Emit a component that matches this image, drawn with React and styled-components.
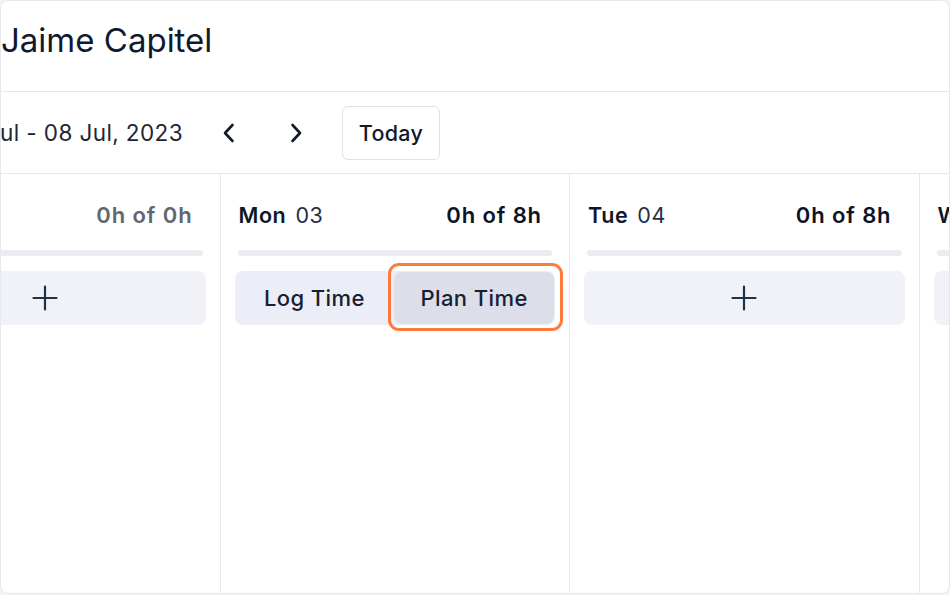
import React from 'react';
import styled, { createGlobalStyle } from 'styled-components';

const GlobalStyle = createGlobalStyle`
  body {
    margin: 0;
    background: #f3f4f7;
    font-family: Inter, "Noto Sans", "Liberation Sans", sans-serif;
    color: #111a2c;
  }
`;

const Card = styled.div`
  width: 950px;
  height: 594px;
  box-sizing: border-box;
  border: 1px solid #e7e8ee;
  border-radius: 8px;
  background: #ffffff;
  overflow: hidden;
  display: flex;
  flex-direction: column;
`;

const Header = styled.header`
  height: 91px;
  flex: none;
  box-sizing: border-box;
  border-bottom: 1px solid #e5e6ef;
  padding: 19px 0 0 0;
`;

const Title = styled.h1`
  margin: 0;
  font-size: 33px;
  font-weight: 400;
  letter-spacing: 0;
  color: #101a2e;
`;

const Toolbar = styled.div`
  height: 82px;
  flex: none;
  box-sizing: border-box;
  border-bottom: 1px solid #e5e6ef;
  display: flex;
  align-items: center;
  margin-left: -118px;
`;

const DateRange = styled.span`
  width: 300px;
  flex: none;
  text-align: right;
  font-size: 22.5px;
  letter-spacing: 0.4px;
  color: #1c2638;
  margin-right: 26px;
  white-space: nowrap;
`;

const NavButton = styled.button`
  width: 40px;
  height: 40px;
  border: none;
  background: transparent;
  padding: 0;
  display: flex;
  align-items: center;
  justify-content: center;
  margin-right: 27px;
  color: #111a2c;
`;

const TodayButton = styled.button`
  height: 54px;
  width: 98px;
  border: 1px solid #dfe1e9;
  border-radius: 6px;
  background: #ffffff;
  font-family: inherit;
  font-size: 21.5px;
  font-weight: 500;
  letter-spacing: 0.3px;
  color: #111a2c;
  margin-left: -1px;
`;

const Days = styled.div`
  flex: 1;
  display: flex;
  margin-left: -130px;
`;

const Column = styled.section`
  flex: none;
  width: 349.5px;
  box-sizing: border-box;
  border-right: 1px solid #e5e6ef;
  padding: 0 14px;
`;

const DayHead = styled.div`
  display: flex;
  justify-content: space-between;
  align-items: center;
  height: 82px;
  padding: 0 13px 0 4px;
`;

const DayName = styled.span`
  font-size: 21.5px;
  color: #0f1727;
  b {
    font-weight: 600;
    letter-spacing: 0.6px;
  }
  span {
    font-weight: 400;
    color: #243044;
    margin-left: 9px;
    letter-spacing: 0.6px;
  }
`;

const Hours = styled.span`
  font-size: 22px;
  font-weight: 600;
  letter-spacing: 0.9px;
  color: ${p => (p.muted ? '#62666f' : '#0c1424')};
`;

const Bar = styled.div`
  height: 6px;
  border-radius: 3px;
  background: #e9edf1;
  margin: -6px 3px 15px;
`;

const AddButton = styled.button`
  width: 100%;
  height: 54px;
  border: none;
  border-radius: 8px;
  background: #f0f2f7;
  display: flex;
  align-items: center;
  justify-content: center;
  color: #1d3246;
  padding: 0;
`;

const Segmented = styled.div`
  display: flex;
  height: 54px;
  border-radius: 8px;
  background: #eceef7;
`;

const SegButton = styled.button`
  position: relative;
  flex: 1;
  border: none;
  border-radius: 8px;
  background: ${p => (p.active ? '#dcdfe9' : 'transparent')};
  font-family: inherit;
  font-size: 22px;
  font-weight: 500;
  letter-spacing: 0.4px;
  color: #172033;
  margin: ${p => (p.active ? '1px 1px 1px 0' : '0')};

  &::after {
    content: '';
    display: ${p => (p.active ? 'block' : 'none')};
    position: absolute;
    top: -9px;
    bottom: -7px;
    left: -6px;
    right: -9px;
    border: 3.5px solid #ff7a3b;
    border-radius: 11px;
  }
`;

const Chevron = ({ dir }) => (
  <svg width="16" height="20" viewBox="0 0 16 20" fill="none">
    <path
      d={dir === 'left' ? 'M11.5 2 L4 10 L11.5 18' : 'M4.5 2 L12 10 L4.5 18'}
      stroke="currentColor"
      strokeWidth="2.6"
      strokeLinecap="round"
      strokeLinejoin="round"
    />
  </svg>
);

const Plus = () => (
  <svg width="26" height="26" viewBox="0 0 26 26" fill="none">
    <path d="M13 1.5 V24.5 M1.5 13 H24.5" stroke="currentColor" strokeWidth="2.2" strokeLinecap="round" />
  </svg>
);

const days = [
  { name: 'Sun', num: '02', hours: '0h of 0h', muted: true },
  { name: 'Mon', num: '03', hours: '0h of 8h', today: true },
  { name: 'Tue', num: '04', hours: '0h of 8h' },
  { name: 'Wed', num: '05', hours: '0h of 8h' },
];

export default function App() {
  return (
    <>
      <GlobalStyle />
      <Card>
        <Header>
          <Title>Jaime Capitel</Title>
        </Header>
        <Toolbar>
          <DateRange>02 Jul - 08 Jul, 2023</DateRange>
          <NavButton aria-label="Previous week">
            <Chevron dir="left" />
          </NavButton>
          <NavButton aria-label="Next week">
            <Chevron dir="right" />
          </NavButton>
          <TodayButton>Today</TodayButton>
        </Toolbar>
        <Days>
          {days.map(d => (
            <Column key={d.name}>
              <DayHead>
                <DayName>
                  <b>{d.name}</b>
                  <span>{d.num}</span>
                </DayName>
                <Hours muted={d.muted}>{d.hours}</Hours>
              </DayHead>
              <Bar />
              {d.today ? (
                <Segmented>
                  <SegButton>Log Time</SegButton>
                  <SegButton active>Plan Time</SegButton>
                </Segmented>
              ) : (
                <AddButton aria-label="Add time">
                  <Plus />
                </AddButton>
              )}
            </Column>
          ))}
        </Days>
      </Card>
    </>
  );
}
